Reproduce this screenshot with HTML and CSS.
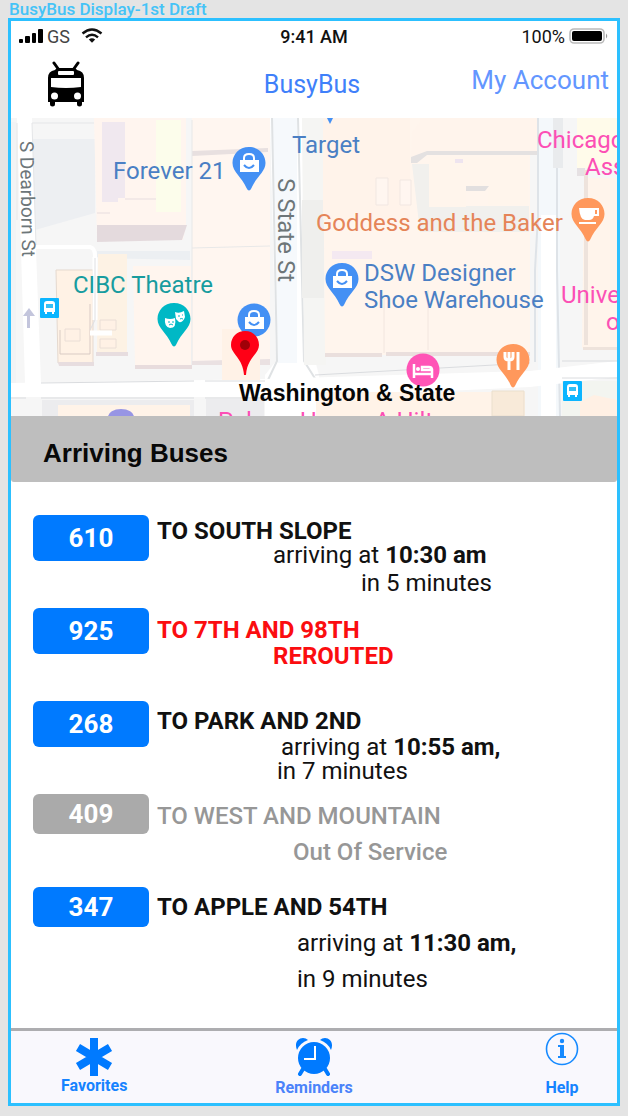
FILE: index.html
```html
<!DOCTYPE html>
<html lang="en">
<head>
<meta charset="utf-8">
<meta name="viewport" content="width=device-width, initial-scale=1">
<title>BusyBus</title>
<link rel="stylesheet" href="styles.css">
</head>
<body>
<p class="artboard-name">BusyBus Display-1st Draft</p>
<main class="screen">
  <div class="status">
    <div class="status-left">
      <svg width="25" height="16" viewBox="0 0 25 16" aria-hidden="true"><rect x="0" y="11" width="4" height="4" rx="1"/><rect x="6" y="8" width="5" height="7" rx="1"/><rect x="13" y="5" width="4" height="10" rx="1"/><rect x="19" y="1" width="5" height="14" rx="1"/></svg>
      <span class="carrier">GS</span>
      <svg class="wifi" width="22" height="16" viewBox="0 0 22 16" fill="none" stroke="#111" stroke-width="2.4" aria-hidden="true"><path d="M1.5 5.5Q11-2.5 20.5 5.5M5 9.3Q11 4 17 9.3"/><path d="M7.8 11.5Q11 9 14.2 11.5L11 14.8Z" fill="#111" stroke="none"/></svg>
    </div>
    <span class="clock">9:41 AM</span>
    <div class="status-right">
      <span>100%</span>
      <svg width="40" height="16" viewBox="0 0 40 16" aria-hidden="true"><rect x="1" y="1" width="34" height="14" rx="4" fill="#fff" stroke="#bbb" stroke-width="1.6"/><rect x="3" y="3" width="30" height="10" rx="2"/><path d="M37 5.500Q39.500 8 37 10.500Z" fill="#999"/></svg>
    </div>
  </div>
  <header class="header">
    <svg class="bus-logo" width="38" height="46" viewBox="0 0 38 46" role="img" aria-label="Bus">
      <path d="M7 2L12 9M31 2L26 9" stroke="#000" stroke-width="3" stroke-linecap="round"/>
      <path d="M11 7H27Q29 7 30 9Q37 10 37 17V41H35V43Q35 45.500 32.500 45.500Q30 45.500 30 43V41H8V43Q8 45.500 5.500 45.500Q3 45.500 3 43V41H1V17Q1 10 8 9Q9 7 11 7Z"/>
      <rect x="11" y="10" width="16" height="4" rx="1" fill="#fff"/><path d="M4 17H34V26Q19 28 4 26Z" fill="#fff"/>
      <circle cx="7.500" cy="35" r="3.500" fill="#fff"/><circle cx="30.500" cy="35" r="3.500" fill="#fff"/>
    </svg>
    <h1 class="brand">BusyBus</h1>
    <a class="account" href="#account">My Account</a>
  </header>

  <svg class="map" viewBox="11 118 606 298" preserveAspectRatio="xMinYMin slice" role="img" aria-label="Map of Washington and State">
    <defs>
      <path id="pin" d="M0-16C10-16 16.500-8.500 16.500 0C16.500 9 7 14 2.500 25Q0 30-2.500 25C-7 14-16.500 9-16.500 0C-16.500-8.500-10-16 0-16Z"/>
      <g id="bag"><path d="M-5-3V-5Q-5-9 0-9Q5-9 5-5V-3" fill="none" stroke="#fff" stroke-width="2"/><rect x="-9" y="-3" width="19" height="12" fill="#fff"/><path d="M-5 2Q0 8 5 2" fill="none" stroke="#4490f4" stroke-width="2"/></g>
      <g id="stop"><rect width="19" height="20" rx="1" fill="#0bb5ff"/><path d="M4 6Q4 3 7 3H12Q15 3 15 6V14H14V16H12V14H7V16H5V14H4Z" fill="#fff"/><path d="M6 6H13V10H6Z" fill="#36bff5"/></g>
    </defs>
    <rect x="11" y="118" width="606" height="298" fill="#f6f6f6"/>
    <path d="M11 122H16V383H11Z" fill="#f2f3f4"/>
    <path d="M32 139H95V213L35 230Z" fill="#edeff2"/>
    <path d="M17 118H32L36 250 41 383H25Z" fill="#fff"/>
    <path d="M35 247H90Q95 248 95 256V300" fill="none" stroke="#fff" stroke-width="4"/>
    <path d="M32 123H94M17 123V220M32 123L36 245" fill="none" stroke="#e5e6e8"/>
    <path d="M94 118H186V225L183 240H97Z" fill="#fff5ef"/>
    <path d="M102 122H125V198H118V202H102Z" fill="#f0e8ef"/><path d="M156 120H181V212H156Z" fill="#fcfdeb"/>
    <path d="M97 225H187L182 240 97 242Z" fill="#e4dadd"/><path d="M97 213H110M125 199H156" stroke="#e7dddf"/>
    <path d="M97 251H190V260L97 258Z" fill="#eceff2"/>
    <path d="M192 118H270V361H192Z" fill="#fff6f0"/><path d="M192 151L268 148V152L192 156Z" fill="#e8e0e0"/><path d="M192 248L270 246M192 120V365" stroke="#e8e8e8" fill="none"/>
    <path d="M192 361L270 359V365L192 365Z" fill="#eae1e2"/>
    <path d="M56 270H93V363H58Z" fill="#fff2e5" stroke="#e5d9cf"/><path d="M98 254H127V352H97Z" fill="#fdf2e4"/>
    <path d="M60 330V354H90V304" fill="none" stroke="#d9cbc4"/><path d="M65 329H80V341H65ZM100 320H116V330H100ZM100 339H116V348H100Z" fill="#fff1e5" stroke="#eaded6"/><path d="M90 333H112M95 257V320" stroke="#fff" stroke-width="5"/>
    <path d="M58 362H94V366H59ZM96 352H128V356H96Z" fill="#e7dddf"/><path d="M95 258V320L90 330" stroke="#dfe0e3" fill="none"/>
    <path d="M133 266H191V366H135Z" fill="#fff5ee"/><path d="M135 365H192V369H135Z" fill="#e8dcdd"/>
    <path d="M270 118H304V320L319 375V416H265V375L276 361Z" fill="#fff"/>
    <path d="M272 118H297V363H278Z" fill="#f6f9fc"/><path d="M272 118L277 361 268 380M298 118L304 361 316 380" fill="none" stroke="#dfe2e4" stroke-width="2"/>
    <path d="M302 118H326V365H304Z" fill="#f5f5f3"/><path d="M302 200H324V298H302Z" fill="#efefed"/>
    <path d="M323 118H530V355H325Z" fill="#fff5ed"/>
    <path d="M323 118H410V220H323Z" fill="#fff3ea"/>
    <path d="M412 132L420 122V118H538V155H424L417 163H411Z" fill="#fff4ec"/>
    <path d="M411 157L427 151H537V155H427L417 163H411Z" fill="#e4e1e1"/>
    <path d="M412 164H430V206H529V232H420Z" fill="#f1f0ed"/>
    <path d="M429 157H528V205H488V187H466V207H429Z" fill="#fff5ec"/><path d="M466 186H489L485 191H466Z" fill="#e2dfdf"/>
    <path d="M455 159H463V163H455Z" fill="#eee4ef"/><path d="M376 178H388V205H376ZM400 180H411V205H400Z" fill="#fff6f0" stroke="#f1e7e2"/>
    <path d="M332 251H372V259H332Z" fill="#f4e9f1"/><path d="M384 298V353M428 290V350" stroke="#f2e6df"/>
    <path d="M325 353H382V357H325ZM386 352H530V356H386Z" fill="#eadfdd"/>
    <path d="M538 118H560V416H538Z" fill="#f4f8fb"/><path d="M541 215H556V416H541Z" fill="#fff"/><path d="M538 118V216L535 270V362M557 118V270L560 416" fill="none" stroke="#dee3e8" stroke-width="2"/>
    <path d="M577 118H617V168H577Z" fill="#fffbea"/><path d="M584 178H617V348H582Z" fill="#fff4eb"/><path d="M577 168H585V176H577Z" fill="#e6e1e3"/><path d="M583 347H617V350H583ZM584 170V345H588V170Z" fill="#eee3dc"/>
    <path d="M553 118H563V168H553Z" fill="#e9ebed"/>
    <path d="M11 383L265 379 530 371 617 361V377L530 387 316 397 11 397Z" fill="#fff"/>
    <path d="M41 383L194 381M205 381H265M11 398H26M41 398H194M205 398H267M315 375L530 363M562 361H617M562 378H617" fill="none" stroke="#dadcdf"/>
    <path d="M42 400H194V416H42ZM206 399H264V416H206Z" fill="#ececee"/><path d="M58 405H190V416H58Z" fill="#fff3e8"/>
    <path d="M316 392H525V416H316Z" fill="#fff3e8"/><path d="M492 391H524V416H492Z" fill="#f8ead9" stroke="#eadfce"/><path d="M562 381H617V416H562Z" fill="#f3f5f0"/><path d="M580 402L594 395 617 400V416H580Z" fill="#fff0e4"/>
    <path d="M27 328H30V316H35L29 308 23 316H27Z" fill="#c3c5dc"/><path d="M222 329H260V380H222Z" fill="#fff2e7"/>
    <path d="M327 118H333L330 124Z" fill="#4490f4"/><ellipse cx="121" cy="417" rx="13" ry="8" fill="#9795e4"/>

    <g class="place blue"><text x="113" y="179">Forever 21</text><text x="292" y="153">Target</text><text x="364" y="281">DSW Designer</text><text x="364" y="308">Shoe Warehouse</text></g>
    <g class="place orange"><text x="316" y="231">Goddess and the Baker</text></g>
    <g class="place teal"><text x="73" y="293">CIBC Theatre</text></g>
    <g class="place pink"><text x="537" y="148">Chicago</text><text x="585" y="175">Ass</text><text x="561" y="303">Unive</text><text x="606" y="330">o</text><text x="218" y="429">Palmer House A Hilton</text></g>
    <text class="street small" transform="translate(20 141) rotate(89)">S Dearborn St</text>
    <text class="street" transform="translate(278 178) rotate(90)">S State St</text>

    <g transform="translate(249 163)"><use href="#pin" fill="#4490f4"/><use href="#bag"/></g>
    <g transform="translate(342 279)"><use href="#pin" fill="#4490f4"/><use href="#bag"/></g>
    <g transform="translate(254 320)"><circle r="16.500" fill="#4490f4"/><use href="#bag"/></g>
    <g transform="translate(588 214)"><use href="#pin" fill="#ff985c"/><path d="M-9-6H11V2H6Q5 6 1 6H-3Q-8 6-9-6Z" fill="#fff"/><path d="M7-4H9V0H7Z" fill="#ff985c"/><path d="M-9 9H8" stroke="#fff" stroke-width="2"/></g>
    <g transform="translate(174 319)"><use href="#pin" fill="#00b8c5"/><path d="M1-7Q5-5 10-8L11-2Q9 4 5 3L2 0ZM-9-1Q-4 1 1-1Q3 9-4 9Q-10 8-9-1Z" fill="#fff"/><path d="M-6 3H-4M-2 3H0M4-3H6M8-4H9M-5 6Q-3 4-1 6M6 0Q7-1 9 0" stroke="#00b8c5" stroke-width="1" fill="none"/></g>
    <g transform="translate(513 360)"><use href="#pin" fill="#ff985c"/><path d="M-8-8V-3Q-8 0-4 0Q0 0 0-3V-8M-4-8V10M5 10V-8" fill="none" stroke="#fff" stroke-width="3"/></g>
    <g transform="translate(423 370)"><circle r="16.500" fill="#ff54b6"/><path d="M-9-6V8M-9 4H9V8M9 4V0H-1V-3H6Q9-3 9 0" fill="none" stroke="#fff" stroke-width="2.500"/><circle cx="-5" cy="-1" r="2" fill="#fff"/></g>
    <use href="#stop" x="40" y="298"/><use href="#stop" x="563" y="381"/>
    <path d="M245 331C253 331 259 337 259 345C259 354 247 358 246 375H244C243 358 231 354 231 345C231 337 237 331 245 331Z" fill="#ff0016"/><circle cx="245" cy="345" r="5" fill="#a00008"/>
    <text class="here" x="239" y="401">Washington &amp; State</text>
  </svg>

  <h2 class="section-title">Arriving Buses</h2>
  <ul class="buses">
    <li class="bus"><button class="route" type="button">610</button><div class="details"><p class="dest">TO SOUTH SLOPE</p><p class="indent-116">arriving at <b>10:30 am</b></p><p class="indent-204 step">in 5 minutes</p></div></li>
    <li class="bus rerouted"><button class="route" type="button">925</button><div class="details lower"><p class="dest">TO 7TH AND 98TH</p><p class="dest indent-116 near">REROUTED</p></div></li>
    <li class="bus"><button class="route" type="button">268</button><div class="details middle"><p class="dest">TO PARK AND 2ND</p><p class="indent-124 near">arriving at <b>10:55 am,</b></p><p class="indent-120">in 7 minutes</p></div></li>
    <li class="bus out"><button class="route short" type="button" disabled>409</button><div class="details lower"><p class="dest">TO WEST AND MOUNTAIN</p><p class="dest indent-136 far">Out Of Service</p></div></li>
    <li class="bus"><button class="route short" type="button">347</button><div class="details middle"><p class="dest">TO APPLE AND 54TH</p><p class="indent-140 far">arriving at <b>11:30 am,</b></p><p class="indent-140 far">in 9 minutes</p></div></li>
  </ul>

  <nav class="tabs">
    <a class="tab favorites" href="#favorites">
      <svg width="38" height="38" viewBox="-19 -19 38 38" aria-hidden="true"><path d="M0-19V19M-16-9.500L16 9.500M-16 9.500L16-9.500" stroke="#007aff" stroke-width="8"/></svg>
      <span>Favorites</span></a>
    <a class="tab reminders" href="#reminders">
      <svg width="38" height="38" viewBox="0 0 38 38" fill="#007aff" aria-hidden="true"><circle cx="19" cy="20" r="16"/><path d="M2 12C-1 5 3 0 8 0Q11 0 13 2Q5 5 2 12ZM36 12C39 5 35 0 30 0Q27 0 25 2Q33 5 36 12Z"/><path d="M8 31L5 36M30 31L33 36" stroke="#007aff" stroke-width="4" stroke-linecap="round"/><path d="M20 8V21H9" fill="none" stroke="#fff" stroke-width="2"/></svg>
      <span>Reminders</span></a>
    <a class="tab help" href="#help">
      <svg width="34" height="34" viewBox="0 0 34 34" aria-hidden="true"><circle cx="17" cy="17" r="15.500" fill="none" stroke="#168aff" stroke-width="1.600"/><circle cx="17" cy="9" r="2.200" fill="#168aff"/><path d="M13 13H19V24H21V26H13V24H15V15H13Z" fill="#168aff"/></svg>
      <span>Help</span></a>
  </nav>
</main>
</body>
</html>
```
FILE: styles.css
```css
* { box-sizing: border-box; }
body {
  margin: 0;
  padding: 0 8px 10px;
  background: #e4e4e4;
  font-family: Roboto, "Liberation Sans", sans-serif;
  color: #111;
}
p, h1, h2, ul { margin: 0; padding: 0; }
a { text-decoration: none; color: inherit; }

.artboard-name {
  font-size: 17px;
  line-height: 18px;
  font-weight: 500;
  color: #45c3f7;
  padding-left: 1px;
}
.screen {
  border: 3px solid #2cc0ff;
  background: #fff;
}

.status {
  display: grid;
  grid-template-columns: 1fr auto 1fr;
  align-items: center;
  height: 30px;
  padding: 0 8px;
  font-size: 18px;
}
.status-left, .status-right { display: flex; align-items: center; gap: 3px; }
.status-right { justify-content: flex-end; gap: 4px; }
.carrier { color: #444; }
.wifi { margin-left: 8px; }
.clock { font-weight: 500; }

.header {
  display: grid;
  grid-template-columns: 1fr auto 1fr;
  align-items: start;
  height: 67px;
  padding: 10px 8px 0 36px;
  font-size: 26px;
  line-height: 32px;
}
.brand {
  padding: 8px 32px 0 0;
  font-size: 25px;
  font-weight: 400;
  color: #3f80fa;
}
.account { justify-self: end; padding-top: 3px; color: #6396ff; }

.map { display: block; width: 100%; height: auto; }
.place { font-size: 24px; }
.blue { fill: #4a7fc4; }
.orange { fill: #e58458; }
.teal { fill: #179c9f; }
.pink { fill: #fc4fb5; }
.street { font-size: 24px; fill: #6d7679; }
.small { font-size: 19px; }
.here {
  font-family: "Liberation Sans", sans-serif;
  font-size: 23px;
  font-weight: 700;
  fill: #050505;
}

.section-title {
  padding: 22px 32px 14px;
  border-radius: 0 0 3px 3px;
  background: #bebebe;
  font-family: "Liberation Sans", sans-serif;
  font-size: 26px;
  line-height: 30px;
  color: #080808;
}

.buses { list-style: none; padding: 33px 22px 37px; font-size: 24px; line-height: 24px; }
.bus {
  display: grid;
  grid-template-columns: 116px 1fr;
  column-gap: 8px;
  align-items: start;
  min-height: 93px;
}
.route {
  height: 46px;
  padding: 0;
  border: 0;
  border-radius: 6px;
  background: #007aff;
  color: #fff;
  font: 700 26px/40px Roboto, sans-serif;
}
.route.short { height: 40px; }
.details { padding-top: 4px; }
.details.middle { padding-top: 8px; }
.details.lower { padding-top: 10px; }
.dest { font-weight: 700; }
.near { margin-top: 2px; }
.step { margin-top: 4px; }
.far { margin-top: 12px; }
.indent-116 { padding-left: 116px; }
.indent-120 { padding-left: 120px; }
.indent-124 { padding-left: 124px; }
.indent-136 { padding-left: 136px; }
.indent-140 { padding-left: 140px; }
.indent-204 { padding-left: 204px; }
.rerouted .dest { color: #fb0d10; }
.out .dest { font-weight: 500; color: #979797; }
.out .route { background: #aaa; }

.tabs {
  display: grid;
  grid-template-columns: 1fr auto 1fr;
  align-items: start;
  height: 75px;
  border-top: 3px solid #adadb0;
  background: #f9f8fd;
  font-size: 16px;
  line-height: 20px;
  font-weight: 700;
  color: #1683ff;
}
.tab { display: flex; flex-direction: column; align-items: center; padding-top: 7px; }
.favorites { justify-self: start; margin-left: 50px; }
.reminders { color: #4b83fa; gap: 2px; }
.help { justify-self: end; margin-right: 38px; padding-top: 1px; gap: 12px; }
```
